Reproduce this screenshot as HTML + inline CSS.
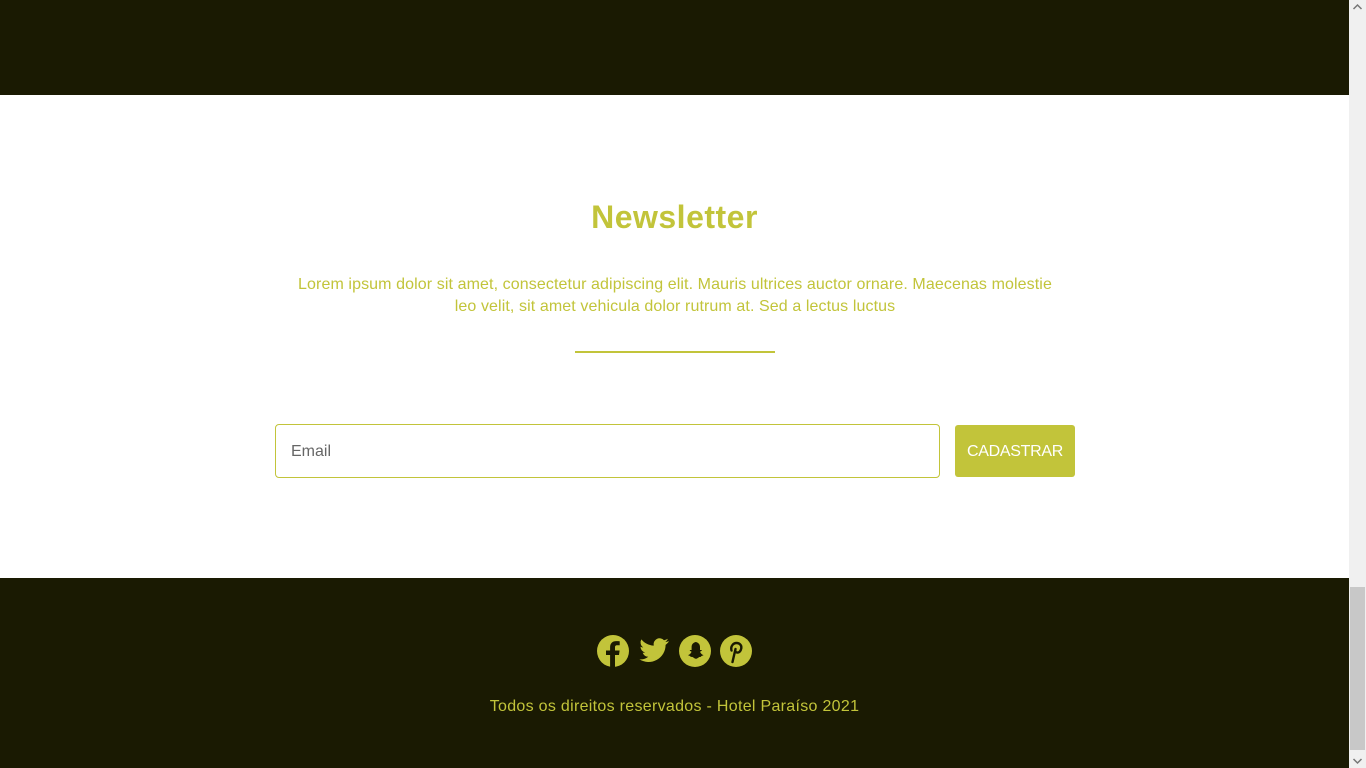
<!DOCTYPE html>
<html><head><meta charset="utf-8"><style>
*{margin:0;padding:0;box-sizing:border-box}
body{width:1366px;height:768px;overflow:hidden;background:#fff;font-family:"Liberation Sans",sans-serif;position:relative}
.top{position:absolute;left:0;top:0;width:1349px;height:95px;background:#1a1a02}
.foot{position:absolute;left:0;top:578px;width:1349px;height:190px;background:#1a1a02}
.sb{position:absolute;left:1349px;top:0;width:17px;height:768px;background:#f0f0f0}
.thumb{position:absolute;left:1350px;top:587px;width:15px;height:163px;background:#c8c8c8}
h1{position:absolute;left:0;width:1349px;top:199px;text-align:center;color:#c2c43a;font-size:32px;font-weight:bold;letter-spacing:0.5px}
p.l{position:absolute;left:285px;width:780px;top:274px;text-align:center;color:#c2c43a;font-size:16px;line-height:22px;letter-spacing:0.1px}
.line{position:absolute;left:575px;top:351px;width:200px;height:2px;background:#c2c43a}
.in{position:absolute;left:275px;top:424px;width:665px;height:54px;border:1px solid #c2c43a;border-radius:4px;padding-left:15px;line-height:54px;color:#666;font-size:16px}
.btn{position:absolute;left:955px;top:425px;width:120px;height:52px;background:#c2c43a;border-radius:3px;color:#fff;font-size:16px;text-align:center;line-height:54px;letter-spacing:-0.3px}
.icons{position:absolute;left:597px;top:635px;display:flex;gap:9px}
.copy{position:absolute;left:0;width:1349px;top:698px;text-align:center;color:#c2c43a;font-size:16px;letter-spacing:0.3px}
</style></head><body>
<div class="top"></div>
<h1>Newsletter</h1>
<p class="l">Lorem ipsum dolor sit amet, consectetur adipiscing elit. Mauris ultrices auctor ornare. Maecenas molestie leo velit, sit amet vehicula dolor rutrum at. Sed a lectus luctus</p>
<div class="line"></div>
<div class="in">Email</div>
<div class="btn">CADASTRAR</div>
<div class="foot"></div>
<div class="icons">
<svg width="32" height="32" viewBox="0 0 32 32"><circle cx="16" cy="16" r="16" fill="#c2c43a"/><path d="M18 32V20h4l.6-4.5H18v-3c0-1.3.4-2.2 2.2-2.2h2.5V6.3c-.4-.1-1.9-.2-3.6-.2-3.6 0-6 2.2-6 6.2v3.2H9V20h4.1v12z" fill="#1a1a02"/></svg>
<svg width="32" height="32" viewBox="0 0 24 24"><path fill="#c2c43a" d="M23 4.6c-.8.4-1.7.6-2.6.7.9-.6 1.6-1.4 2-2.5-.9.5-1.9.9-2.9 1.1a4.5 4.5 0 0 0-7.7 4.1C8 7.8 4.7 6 2.5 3.3a4.5 4.5 0 0 0 1.4 6c-.7 0-1.4-.2-2-.6 0 2.2 1.6 4 3.6 4.4-.7.2-1.4.2-2 .1.6 1.800 2.200 3.100 4.200 3.100A9 9 0 0 1 1 18.2 12.8 12.8 0 0 0 20.7 7.4c.9-.6 1.7-1.4 2.3-2.3z"/></svg>
<svg width="32" height="32" viewBox="0 0 32 32"><circle cx="16" cy="16" r="16" fill="#c2c43a"/><path fill="#1a1a02" d="M16 7c3 0 5 2.2 5 5v3c.6.2 1.5-.3 1.8.2.3.6-1.2 1.1-1.7 1.4.3 1.5 1.9 3.2 3.4 3.4-.2.7-1.5.8-2.2 1-.2.6-.1 1-.7.9-1.5-.2-2.2.9-3.600 1.600-1 .4-1.6.4-2.6-.2-1.3-.8-1.8-1.6-3.4-1.3-.6.1-.5-.5-.7-1-.7-.2-2-.3-2.2-1 1.5-.3 3.1-1.9 3.4-3.4-.5-.3-2-.8-1.7-1.4.3-.5 1.2 0 1.8-.2v-3c0-2.8 2-5 5-5z"/></svg>
<svg width="32" height="32" viewBox="0 0 32 32"><circle cx="16" cy="16" r="16" fill="#c2c43a"/><path fill="none" stroke="#1a1a02" stroke-width="2.4" stroke-linecap="round" d="M11.5 15.5c-1.2-4.5 2-7.5 5-7.5 3.2 0 5.3 2.3 4.8 5.3-.5 3-2.5 4.7-4.5 4.2-1.500-.3-1.700-1.500-1.400-3M15.5 14l-3 13"/></svg>
</div>
<div class="copy">Todos os direitos reservados - Hotel Paraíso 2021</div>
<div class="sb"></div><div class="thumb"></div>
<svg style="position:absolute;left:1352px;top:3px" width="11" height="8" viewBox="0 0 11 8"><path d="M1.5 6L5.5 2L9.5 6" stroke="#777" stroke-width="1.5" fill="none"/></svg>
<svg style="position:absolute;left:1352px;top:757px" width="11" height="8" viewBox="0 0 11 8"><path d="M1.5 2L5.5 6L9.5 2" stroke="#777" stroke-width="1.5" fill="none"/></svg>
</body></html>
